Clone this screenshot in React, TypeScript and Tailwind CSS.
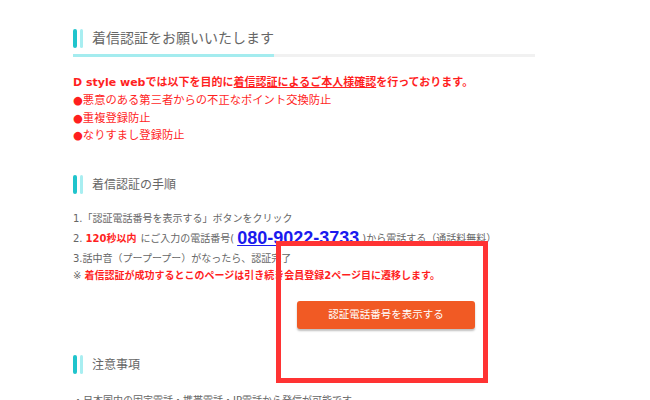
export default function App() {
  const font = "font-['DejaVu_Sans','Noto_Sans_CJK_JP',sans-serif]";
  return (
    <div className={`relative h-[400px] w-[650px] overflow-hidden bg-white ${font}`}>
      <div className="w-[535px] pl-[73px] pt-[28px]">
        {/* 見出し1 */}
        <Heading text="着信認証をお願いいたします" size="text-[14px]" />
        <div className="mt-[6px] flex h-[3px]">
          <div className="w-[201px] bg-[#a4ecef]" />
          <div className="flex-1 bg-[#f1f1f1]" />
        </div>

        <div className="mt-[17px] text-[#ff1f1f]">
          <p className="text-[11px] font-bold leading-[18px]">
            D style webでは以下を目的に<span className="underline">着信認証によるご本人様確認</span>を行っております。
          </p>
          <p className="text-[11.3px] leading-[17.5px]">●悪意のある第三者からの不正なポイント交換防止</p>
          <p className="text-[11.3px] leading-[17.5px]">●重複登録防止</p>
          <p className="text-[11.3px] leading-[17.5px]">●なりすまし登録防止</p>
        </div>

        <div className="mt-[30px]">
          <Heading text="着信認証の手順" size="text-[12px]" />
        </div>

        <div className="mt-[14px] text-[10px] text-[#666]">
          <p className="leading-[20px]">1.「認証電話番号を表示する」ボタンをクリック</p>
          <p className="flex h-[20px] items-center whitespace-nowrap">
            2. <span className="ml-[3px] font-bold text-[#ff1f1f]">120秒以内</span>
            <span className="ml-[4px]">にご入力の電話番号(</span>
            <span className="mx-[3px] font-['Liberation_Sans',sans-serif] text-[18px] font-bold text-[#1a1aee] underline">080-9022-3733</span>
            <span>)から電話する（通話料無料）</span>
          </p>
          <p className="leading-[20px]">3.話中音（プープープー）がなったら、認証完了</p>
          <p className="leading-[14px]">
            ※ <span className="font-bold text-[#ff1f1f]">着信認証が成功するとこのページは引き続き会員登録2ページ目に遷移します。</span>
          </p>
        </div>

        <button className="ml-[224px] mt-[18px] flex h-[28px] w-[178px] items-center justify-center rounded-[3px] bg-[#f15a24] text-[10.5px] text-white shadow-[0_2px_2px_rgba(0,0,0,0.25)]">
          認証電話番号を表示する
        </button>

        <div className="mt-[26px]">
          <Heading text="注意事項" size="text-[12px]" />
        </div>

        <p className="mt-[18px] whitespace-nowrap text-[10px] text-[#666]">
          ・日本国内の固定電話・携帯電話・IP電話から発信が可能です。
        </p>
      </div>

      {/* 注釈の赤枠 */}
      <div className="absolute left-[276px] top-[241px] h-[142px] w-[212px] border-[5px] border-[#ff3333]" />
    </div>
  );
}

function Heading({ text, size }: { text: string; size: string }) {
  return (
    <div className="flex h-[20px] items-center">
      <div className="h-[19px] w-[4px] rounded-[2px] bg-[#20c4cc]" />
      <div className="ml-[3px] h-[19px] w-[3px] rounded-[2px] bg-[#a8eef1]" />
      <span className={`ml-[9px] ${size} text-[#666]`}>{text}</span>
    </div>
  );
}
